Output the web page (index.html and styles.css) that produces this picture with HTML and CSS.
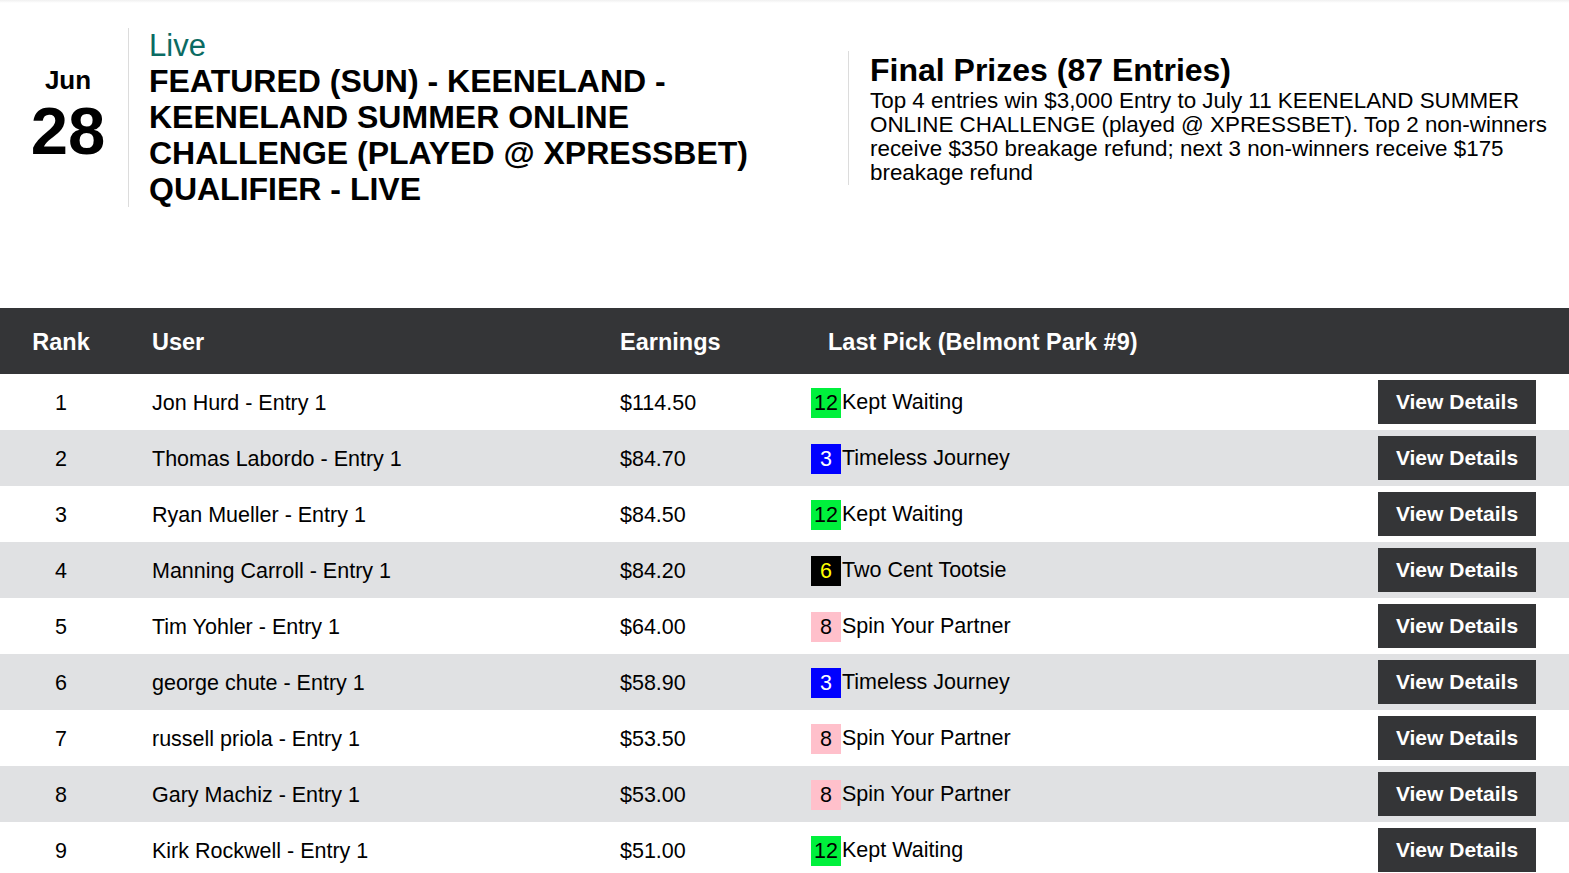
FILE: index.html
```html
<!DOCTYPE html>
<html>
<head>
<meta charset="utf-8">
<link rel="stylesheet" href="styles.css">
</head>
<body>
<div class="topline"></div>
<section class="contest">
  <div class="contest-left">
    <div class="date">
      <div class="month">Jun</div>
      <div class="day">28</div>
    </div>
    <div class="info">
      <div class="status">Live</div>
      <h1 class="title">FEATURED (SUN) - KEENELAND - KEENELAND SUMMER ONLINE CHALLENGE (PLAYED @ XPRESSBET) QUALIFIER - LIVE</h1>
    </div>
  </div>
  <div class="prizes">
    <h2 class="prizes-title">Final Prizes (87 Entries)</h2>
    <p class="prizes-text">Top 4 entries win $3,000 Entry to July 11 KEENELAND SUMMER ONLINE CHALLENGE (played @ XPRESSBET). Top 2 non-winners receive $350 breakage refund; next 3 non-winners receive $175 breakage refund</p>
  </div>
</section>

<table class="board">
  <colgroup>
    <col class="c-rank"><col class="c-user"><col class="c-earn"><col class="c-pick"><col class="c-act">
  </colgroup>
  <thead>
    <tr>
      <th class="rank">Rank</th>
      <th>User</th>
      <th>Earnings</th>
      <th class="pick-h">Last Pick (Belmont Park #9)</th>
      <th></th>
    </tr>
  </thead>
  <tbody>
    <tr><td class="rank">1</td><td>Jon Hurd - Entry 1</td><td>$114.50</td><td><span class="pn green">12</span>Kept Waiting</td><td class="act"><button class="btn">View Details</button></td></tr>
    <tr><td class="rank">2</td><td>Thomas Labordo - Entry 1</td><td>$84.70</td><td><span class="pn blue">3</span>Timeless Journey</td><td class="act"><button class="btn">View Details</button></td></tr>
    <tr><td class="rank">3</td><td>Ryan Mueller - Entry 1</td><td>$84.50</td><td><span class="pn green">12</span>Kept Waiting</td><td class="act"><button class="btn">View Details</button></td></tr>
    <tr><td class="rank">4</td><td>Manning Carroll - Entry 1</td><td>$84.20</td><td><span class="pn black">6</span>Two Cent Tootsie</td><td class="act"><button class="btn">View Details</button></td></tr>
    <tr><td class="rank">5</td><td>Tim Yohler - Entry 1</td><td>$64.00</td><td><span class="pn pink">8</span>Spin Your Partner</td><td class="act"><button class="btn">View Details</button></td></tr>
    <tr><td class="rank">6</td><td>george chute - Entry 1</td><td>$58.90</td><td><span class="pn blue">3</span>Timeless Journey</td><td class="act"><button class="btn">View Details</button></td></tr>
    <tr><td class="rank">7</td><td>russell priola - Entry 1</td><td>$53.50</td><td><span class="pn pink">8</span>Spin Your Partner</td><td class="act"><button class="btn">View Details</button></td></tr>
    <tr><td class="rank">8</td><td>Gary Machiz - Entry 1</td><td>$53.00</td><td><span class="pn pink">8</span>Spin Your Partner</td><td class="act"><button class="btn">View Details</button></td></tr>
    <tr><td class="rank">9</td><td>Kirk Rockwell - Entry 1</td><td>$51.00</td><td><span class="pn green">12</span>Kept Waiting</td><td class="act"><button class="btn">View Details</button></td></tr>
  </tbody>
</table>
</body>
</html>
```

FILE: styles.css
```css
* { box-sizing: border-box; }
html, body { margin: 0; padding: 0; background: #fff; }
body {
  font-family: "Liberation Sans", Arial, sans-serif;
  color: #000;
  overflow: hidden;
}
.topline {
  height: 3px;
  background: linear-gradient(#f0f0f0, #fff);
}
.contest {
  display: flex;
  align-items: center;
  height: 305px;
  padding: 20px 0 96px 0;
}
.contest-left {
  display: flex;
  align-items: center;
  width: 848px;
}
.date {
  width: 121px;
  margin-left: 8px;
  align-self: stretch;
  border-right: 1px solid #dcdcdc;
  display: flex;
  flex-direction: column;
  align-items: center;
  justify-content: center;
  padding-bottom: 4px;
}
.month {
  font-size: 26px;
  font-weight: bold;
  line-height: 30px;
}
.day {
  font-size: 67px;
  font-weight: bold;
  line-height: 72px;
}
.info {
  padding-left: 20px;
  width: 710px;
}
.status {
  color: #0b6b63;
  font-size: 31px;
  line-height: 35px;
}
.title {
  margin: 0;
  width: 660px;
  font-size: 32px;
  line-height: 36px;
  font-weight: bold;
}
.prizes {
  border-left: 1px solid #dcdcdc;
  padding-left: 21px;
  width: 720px;
}
.prizes-title {
  margin: 0;
  font-size: 32px;
  line-height: 38px;
  font-weight: bold;
}
.prizes-text {
  margin: 0;
  font-size: 22.4px;
  line-height: 24px;
  padding-right: 5px;
}
.board {
  width: 100%;
  border-collapse: collapse;
  table-layout: fixed;
}
.c-rank { width: 122px; }
.c-user { width: 468px; }
.c-earn { width: 191px; }
.c-act { width: 224px; }
.board th {
  background: #343537;
  color: #fff;
  font-size: 23.5px;
  font-weight: bold;
  text-align: left;
  height: 66px;
  padding: 2px 0 0 30px;
}
.board th.rank { padding: 2px 0 0 0; text-align: center; }
.board th.pick-h { padding-left: 47px; }
.board td {
  font-size: 21.5px;
  height: 56px;
  padding: 2px 0 0 30px;
  white-space: nowrap;
}
.board td.rank { padding: 2px 0 0 0; text-align: center; }
.board tbody tr:nth-child(even) td { background: #e0e1e3; }
.pn {
  display: inline-block;
  width: 30px;
  height: 30px;
  line-height: 30px;
  text-align: center;
  margin-right: 1px;
  vertical-align: middle;
}
.green { background: #00f03c; color: #000; }
.blue { background: #0000ff; color: #fff; }
.black { background: #000; color: #ffff00; }
.pink { background: #ffc0cb; color: #000; }
.board td.act {
  text-align: right;
  padding: 0 33px 0 0;
}
.btn {
  font-family: "Liberation Sans", Arial, sans-serif;
  background: #343537;
  color: #fff;
  border: 0;
  font-size: 21px;
  font-weight: bold;
  width: 158px;
  height: 44px;
  padding: 0;
  vertical-align: middle;
}
```
